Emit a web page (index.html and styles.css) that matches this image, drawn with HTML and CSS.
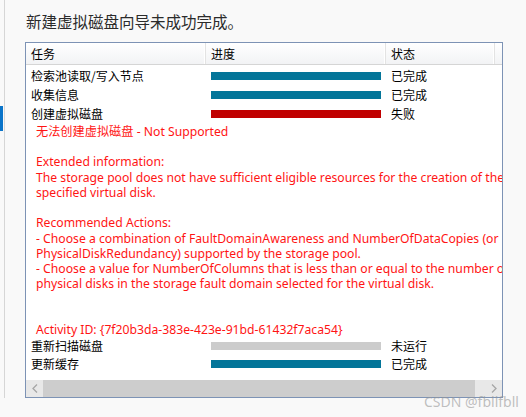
FILE: index.html
```html
<!DOCTYPE html>
<html lang="zh-CN">
<head>
<meta charset="utf-8">
<link rel="stylesheet" href="styles.css">
</head>
<body>
<div class="page">
  <div class="rail"><div class="rail-mark"></div></div>
  <div class="main">
    <h1 class="title">新建虚拟磁盘向导未成功完成。</h1>
    <div class="grid">
      <div class="viewport">
        <div class="content">
          <div class="head">
            <div class="hcell c-task">任务</div>
            <div class="hcell c-prog">进度</div>
            <div class="hcell c-stat">状态</div>
            <div class="hcell c-fill"></div>
          </div>
          <div class="row">
            <div class="cell c-task">检索池读取/写入节点</div>
            <div class="cell c-prog"><div class="bar done"></div></div>
            <div class="cell c-stat">已完成</div>
          </div>
          <div class="row">
            <div class="cell c-task">收集信息</div>
            <div class="cell c-prog"><div class="bar done"></div></div>
            <div class="cell c-stat">已完成</div>
          </div>
          <div class="row">
            <div class="cell c-task">创建虚拟磁盘</div>
            <div class="cell c-prog"><div class="bar fail"></div></div>
            <div class="cell c-stat">失败</div>
          </div>
          <div class="error">无法创建虚拟磁盘 - Not Supported

Extended information:
The storage pool does not have sufficient eligible resources for the creation of the
specified virtual disk.

Recommended Actions:
- Choose a combination of FaultDomainAwareness and NumberOfDataCopies (or
PhysicalDiskRedundancy) supported by the storage pool.
- Choose a value for NumberOfColumns that is less than or equal to the number of
physical disks in the storage fault domain selected for the virtual disk.


Activity ID: {7f20b3da-383e-423e-91bd-61432f7aca54}</div>
          <div class="row tight">
            <div class="cell c-task">重新扫描磁盘</div>
            <div class="cell c-prog"><div class="bar idle"></div></div>
            <div class="cell c-stat">未运行</div>
          </div>
          <div class="row tight">
            <div class="cell c-task">更新缓存</div>
            <div class="cell c-prog"><div class="bar done"></div></div>
            <div class="cell c-stat">已完成</div>
          </div>
        </div>
      </div>
      <div class="hscroll">
        <div class="sbtn">
          <svg width="6" height="9" viewBox="0 0 6 9"><polyline points="5,0.5 1,4.5 5,8.5" fill="none" stroke="#a6a6a6" stroke-width="1.3"/></svg>
        </div>
        <div class="thumb"></div>
        <div class="strack"></div>
        <div class="sbtn">
          <svg width="6" height="9" viewBox="0 0 6 9"><polyline points="1,0.5 5,4.5 1,8.5" fill="none" stroke="#a6a6a6" stroke-width="1.3"/></svg>
        </div>
      </div>
    </div>
  </div>
  <div class="watermark">CSDN @fbllfbll</div>
</div>
</body>
</html>
```
FILE: styles.css
```css
* { box-sizing: border-box; }
html, body { margin: 0; padding: 0; }
body {
  background: #f9f9f9;
  width: 526px;
  height: 417px;
  overflow: hidden;
  font-family: "Noto Sans", "Noto Sans CJK SC", sans-serif;
}
.page {
  position: relative;
  display: flex;
  height: 417px;
}
.rail {
  width: 5px;
  height: 398px;
  border-right: 1px solid #d6d6d6;
  flex: none;
}
.rail-mark {
  margin-top: 106px;
  width: 3px;
  height: 25px;
  background: #0a74c9;
}
.main {
  padding-left: 20px;
  display: flex;
  flex-direction: column;
}
.title {
  margin: 10px 0 0 1px;
  font-family: "Noto Sans CJK SC", sans-serif;
  font-weight: normal;
  font-size: 15.5px;
  line-height: 22px;
  color: #2b2b2b;
  height: 22px;
}
.grid {
  margin-top: 10px;
  width: 478px;
  height: 356px;
  border: 1px solid #7d93b5;
  background: #fff;
  display: flex;
  flex-direction: column;
}
.viewport {
  height: 337px;
  overflow: hidden;
  flex: none;
}
.content {
  width: 620px;
  font-family: "Noto Sans CJK SC", sans-serif;
  font-size: 12px;
  color: #000;
}
.head {
  display: flex;
  height: 22px;
  background: linear-gradient(#ffffff, #f2f3f5);
  border-bottom: 1px solid #d5d5d5;
}
.hcell {
  height: 21px;
  line-height: 21px;
  padding-left: 5px;
  border-right: 1px solid #e3e3e3;
  box-shadow: inset -1px 0 0 #fff;
}
.c-task { width: 180px; flex: none; }
.c-prog { width: 180px; flex: none; }
.c-stat { width: 109px; flex: none; }
.c-fill { flex: 1; border-right: none; box-shadow: none; }
.row {
  display: flex;
  height: 19px;
  align-items: center;
}
.row:nth-child(2) { margin-top: 1px; }
.row.tight { height: 18px; }
.cell {
  padding-left: 5px;
  line-height: 18px;
  white-space: nowrap;
}
.bar {
  width: 170px;
  height: 8px;
}
.bar.done { background: #037599; }
.bar.fail { background: #c00000; }
.bar.idle { background: #cccccc; }
.error {
  white-space: pre;
  color: #ff1414;
  font-family: "Noto Sans", "Noto Sans CJK SC", sans-serif;
  font-size: 12.2px;
  line-height: 15.23px;
  padding: 1px 0 0 10px;
  height: 214px;
}
.hscroll {
  display: flex;
  height: 17px;
  flex: none;
  background: #e8e8e8;
}
.sbtn {
  width: 17px;
  display: flex;
  align-items: center;
  justify-content: center;
  flex: none;
}
.thumb {
  width: 432px;
  background: #cdcdcd;
  flex: none;
}
.strack { flex: 1; }
.watermark {
  position: absolute;
  left: 424px;
  top: 393px;
  font-family: "Noto Sans", sans-serif;
  font-size: 14px;
  color: rgba(150, 150, 150, 0.6);
  line-height: 18px;
}
```
